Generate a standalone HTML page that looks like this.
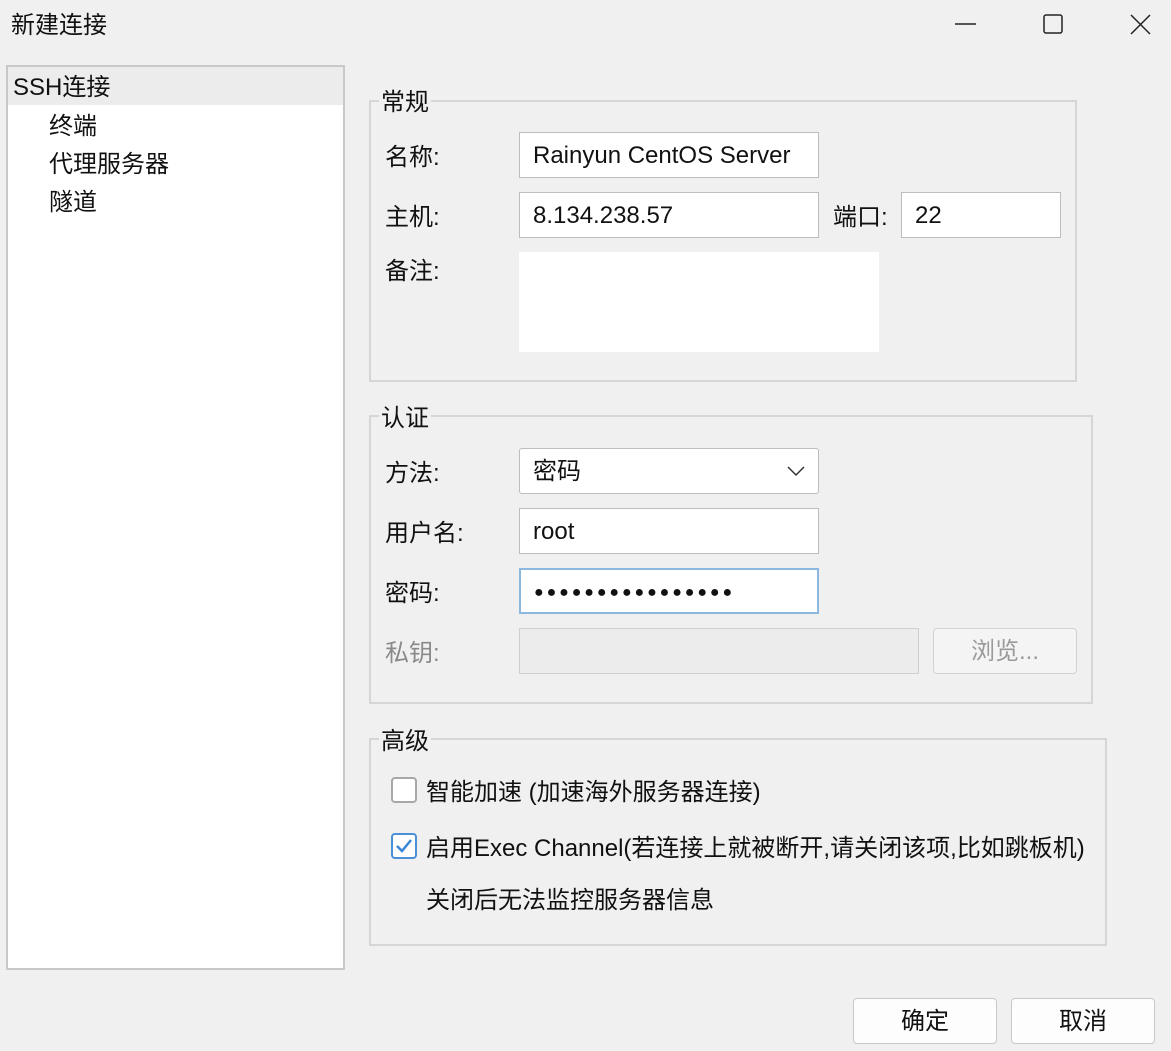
<!DOCTYPE html><html><head><meta charset="utf-8"><style>
body{margin:0;width:1171px;height:1051px;background:#f0f0f0;font-family:"Liberation Sans","Noto Sans CJK SC",sans-serif;font-size:24px;color:#111;position:relative;overflow:hidden}
.a{position:absolute;white-space:nowrap}
.box{position:absolute;border:2px solid #d6d6d6;box-sizing:border-box}
.leg{position:absolute;background:#f0f0f0;padding:0 2px;line-height:30px}
.in{position:absolute;background:#fff;border:1px solid #bdbdbd;box-sizing:border-box;line-height:46px;padding-left:13px}
.lbl{position:absolute;left:385px;line-height:30px}
.btn{position:absolute;border:1px solid #c8c8c8;background:#fdfdfd;border-radius:4px;box-sizing:border-box;text-align:center;line-height:46px}
</style></head><body>
<div class="a" style="left:11px;top:11px;line-height:30px">新建连接</div>
<svg class="a" style="left:950px;top:10px" width="210" height="30"><line x1="5" y1="14" x2="26" y2="14" stroke="#222" stroke-width="1.5"/><rect x="94" y="5" width="18" height="18" fill="none" stroke="#222" stroke-width="1.5" rx="2"/><path d="M181 5L200 24M200 5L181 24" stroke="#222" stroke-width="1.5"/></svg>
<div class="a" style="left:6px;top:65px;width:339px;height:905px;background:#fff;border:2px solid #c8c8c8;box-sizing:border-box"></div>
<div class="a" style="left:8px;top:67px;width:335px;height:38px;background:#ececec"></div>
<div class="a" style="left:13px;top:73px;line-height:30px">SSH连接</div>
<div class="a" style="left:49px;top:112px;line-height:30px">终端</div>
<div class="a" style="left:49px;top:150px;line-height:30px">代理服务器</div>
<div class="a" style="left:49px;top:188px;line-height:30px">隧道</div>

<div class="box" style="left:369px;top:100px;width:708px;height:282px"></div>
<div class="leg" style="left:379px;top:88px">常规</div>
<div class="lbl" style="top:143px">名称:</div>
<div class="in" style="left:519px;top:132px;width:300px;height:46px">Rainyun CentOS Server</div>
<div class="lbl" style="top:203px">主机:</div>
<div class="in" style="left:519px;top:192px;width:300px;height:46px">8.134.238.57</div>
<div class="a" style="left:833px;top:203px;line-height:30px">端口:</div>
<div class="in" style="left:901px;top:192px;width:160px;height:46px">22</div>
<div class="lbl" style="top:257px">备注:</div>
<div class="a" style="left:519px;top:252px;width:360px;height:100px;background:#fff"></div>

<div class="box" style="left:369px;top:415px;width:724px;height:289px"></div>
<div class="leg" style="left:379px;top:404px">认证</div>
<div class="lbl" style="top:459px">方法:</div>
<div class="in" style="left:519px;top:448px;width:300px;height:46px;border-radius:3px">密码
<svg class="a" style="left:266px;top:15px" width="20" height="14"><path d="M2 3L10 11L18 3" fill="none" stroke="#333" stroke-width="1.5"/></svg></div>
<div class="lbl" style="top:519px">用户名:</div>
<div class="in" style="left:519px;top:508px;width:300px;height:46px">root</div>
<div class="lbl" style="top:579px">密码:</div>
<div class="in" style="left:519px;top:568px;width:300px;height:46px;border:2px solid #8cb8e0;font-size:16px;letter-spacing:2.9px;padding-left:13px">●●●●●●●●●●●●●●●●</div>
<div class="lbl" style="top:639px;color:#8a8a8a">私钥:</div>
<div class="in" style="left:519px;top:628px;width:400px;height:46px;background:#ececec;border-color:#cfcfcf"></div>
<div class="btn" style="left:933px;top:628px;width:144px;height:46px;background:#f4f4f4;color:#9a9a9a;border-color:#d2d2d2">浏览...</div>

<div class="box" style="left:369px;top:738px;width:738px;height:208px"></div>
<div class="leg" style="left:379px;top:727px">高级</div>
<div class="a" style="left:391px;top:777px;width:26px;height:26px;border:2px solid #a8a8a8;border-radius:4px;background:#fff;box-sizing:border-box"></div>
<div class="a" style="left:426px;top:778px;line-height:30px">智能加速 (加速海外服务器连接)</div>
<div class="a" style="left:391px;top:833px;width:26px;height:26px;border:2px solid #4a90d9;border-radius:4px;background:#fff;box-sizing:border-box"></div>
<svg class="a" style="left:393px;top:835px" width="22" height="22"><path d="M4 11L9 16L18 5" fill="none" stroke="#3a86d6" stroke-width="2.5"/></svg>
<div class="a" style="left:426px;top:834px;line-height:30px">启用Exec Channel(若连接上就被断开,请关闭该项,比如跳板机)</div>
<div class="a" style="left:426px;top:886px;line-height:30px">关闭后无法监控服务器信息</div>

<div class="btn" style="left:853px;top:998px;width:144px;height:46px">确定</div>
<div class="btn" style="left:1011px;top:998px;width:144px;height:46px">取消</div>
</body></html>
